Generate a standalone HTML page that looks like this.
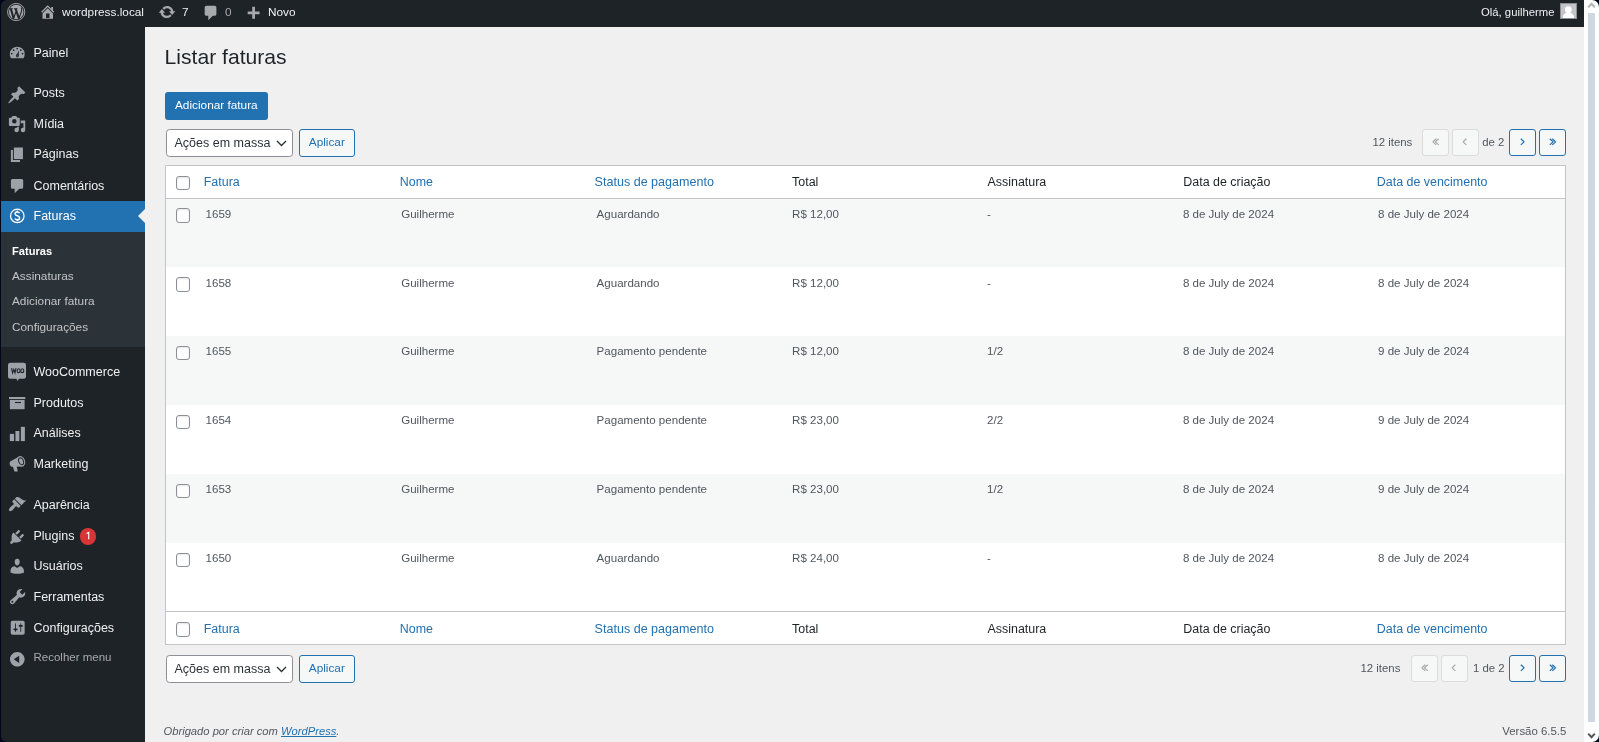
<!DOCTYPE html>
<html><head><meta charset="utf-8"><title>Listar faturas</title>
<style>
html,body{margin:0;padding:0;width:1599px;height:742px;overflow:hidden;background:#02061a;font-family:"Liberation Sans", sans-serif;}
.t{position:absolute;white-space:nowrap;line-height:20px;}
.ic{position:absolute;}
.box{position:absolute;box-sizing:border-box;}
.wrap{position:absolute;left:0;top:0;width:1599px;height:742px;will-change:transform;background:#f0f0f1;clip-path:inset(0 0 0 1px round 6px 7px 7px 6px);}
</style></head><body><div class="wrap">
<div class="box" style="left:0;top:0;width:1584px;height:27px;background:#1d2327"></div>
<svg class="ic" style="left:0;top:0;width:30px;height:26px" viewBox="0 0 30 26">
<circle cx="16.2" cy="12" r="8.6" fill="none" stroke="#a7aaad" stroke-width="0.95"/>
<circle cx="16.2" cy="12" r="7.25" fill="#a7aaad"/>
<g stroke="#1d2327" fill="none" stroke-linecap="butt">
<path d="M10.9 8.9L13.6 18.6" stroke-width="2"/>
<path d="M13.5 18.6L16 11.6" stroke-width="1.15"/>
<path d="M15.6 8.9L19 18.6" stroke-width="2"/>
<path d="M18.9 18.6L21.5 11.4Q22.3 9.3 21.3 7.6" stroke-width="1.15"/>
<path d="M9.3 8.8H12.8M14 8.8H17.4" stroke-width="1.05"/>
</g></svg>
<svg class="ic" style="left:38.85px;top:2.9px;width:17.5px;height:17.5px;color:#a7aaad" viewBox="0 0 20 20" fill="currentColor"><path d="M16 8.5l1.53 1.53-1.06 1.06L10 4.62l-6.47 6.47-1.06-1.06L10 2.5l4 4v-2h2v4zm-6-2.46l6 5.99V18H4v-5.97zM12 17v-5H8v5h4z"/></svg>
<div class="t" style="left:62px;top:1.91px;font-size:11.8px;color:#f0f0f1;">wordpress.local</div>
<svg class="ic" style="left:158.2px;top:2.9px;width:18px;height:18px;color:#a7aaad" viewBox="0 0 20 20" fill="currentColor"><path d="M10.2 3.28c3.53 0 6.43 2.61 6.92 6h2.08l-3.5 4-3.5-4h2.32c-.45-1.97-2.21-3.45-4.32-3.45-1.45 0-2.73.71-3.54 1.78L4.95 5.66a6.965 6.965 0 0 1 5.25-2.38zm-.4 13.44c-3.52 0-6.43-2.61-6.92-6H.8l3.5-4c1.17 1.33 2.33 2.67 3.5 4H5.48c.45 1.97 2.21 3.45 4.32 3.45 1.45 0 2.73-.71 3.54-1.78l1.71 1.95a6.95 6.95 0 0 1-5.25 2.38z"/></svg>
<div class="t" style="left:182px;top:1.91px;font-size:11.8px;color:#f0f0f1;">7</div>
<svg class="ic" style="left:201.5px;top:4.3px;width:18px;height:18px;color:#a7aaad" viewBox="0 0 20 20" fill="currentColor"><path d="M5 2h9c1.1 0 2 .9 2 2v7c0 1.1-.9 2-2 2h-2l-5 5v-5H5c-1.1 0-2-.9-2-2V4c0-1.1.9-2 2-2z"/></svg>
<div class="t" style="left:225px;top:1.91px;font-size:11.8px;color:#a7aaad;">0</div>
<svg class="ic" style="left:244.4px;top:5.2px;width:18.3px;height:18.3px;color:#a7aaad" viewBox="0 0 20 20" fill="currentColor"><path d="M17 7v3h-5v5H9v-5H4V7h5V2h3v5h5z"/></svg>
<div class="t" style="left:268px;top:1.91px;font-size:11.8px;color:#f0f0f1;">Novo</div>
<div class="t" style="left:1481px;top:2.08px;font-size:11.3px;color:#f0f0f1;">Olá, guilherme</div>
<div class="box" style="left:1560px;top:3px;width:17px;height:16px;background:#c3c4c7;border:1px solid #8c8f94;overflow:hidden"><svg style="position:absolute;left:0;top:0" width="15" height="14" viewBox="0 0 15 14"><circle cx="7.3" cy="5.6" r="3.4" fill="#fff"/><path d="M1.7 14c0-3.4 2.4-5.4 5.6-5.4s5.8 2 5.8 5.4z" fill="#fff"/></svg></div>
<div class="box" style="left:0;top:26px;width:145px;height:716px;background:#1d2327"></div>
<div class="box" style="left:0;top:201px;width:145px;height:31px;background:#2271b1"></div>
<div class="box" style="left:0;top:232px;width:145px;height:115px;background:#2c3338"></div>
<svg class="ic" style="left:138px;top:209px;width:7px;height:14px" viewBox="0 0 7 14"><path d="M7 0L0 7l7 7z" fill="#f0f0f1"/></svg>
<div class="t" style="left:33.5px;top:42.67px;font-size:12.5px;color:#f0f0f1;">Painel</div>
<svg class="ic" style="left:7.17px;top:84.62px;width:19.75px;height:19.75px;color:#9ca2a7" viewBox="0 0 20 20" fill="currentColor"><path d="M10.44 3.02l1.82-1.82 6.36 6.35-1.83 1.82c-1.05-.68-2.48-.57-3.41.36l-.75.75c-.92.93-1.04 2.35-.35 3.41l-1.83 1.82-2.41-2.41-2.8 2.79c-.42.42-3.38 2.71-3.8 2.29s1.86-3.39 2.28-3.81l2.79-2.79L4.1 9.36l1.83-1.82c1.05.69 2.48.57 3.4-.36l.75-.75c.93-.92 1.05-2.35.36-3.41z"/></svg>
<div class="t" style="left:33.5px;top:82.67px;font-size:12.5px;color:#f0f0f1;">Posts</div>
<svg class="ic" style="left:7.97px;top:115.02px;width:18.17px;height:18.17px;color:#9ca2a7" viewBox="0 0 20 20" fill="currentColor"><path d="M13 11V4c0-.55-.45-1-1-1h-1.67L9 1H5L3.67 3H2c-.55 0-1 .45-1 1v7c0 .55.45 1 1 1h10c.55 0 1-.45 1-1zM7 4.5a2.5 2.5 0 1 1 0 5 2.5 2.5 0 0 1 0-5zM14 6h5v10.5a2.5 2.5 0 1 1-2.5-2.5c.17 0 .34.02.5.05V9h-3V6zm-4 8.05V13h2v3.5a2.5 2.5 0 1 1-2.5-2.5c.17 0 .34.02.5.05z"/></svg>
<div class="t" style="left:33.5px;top:113.67px;font-size:12.5px;color:#f0f0f1;">Mídia</div>
<div class="t" style="left:33.5px;top:144.17px;font-size:12.5px;color:#f0f0f1;">Páginas</div>
<div class="t" style="left:33.5px;top:176.17px;font-size:12.5px;color:#f0f0f1;">Comentários</div>
<div class="t" style="left:33.5px;top:205.67px;font-size:12.5px;color:#fff;">Faturas</div>
<div class="t" style="left:33.5px;top:362.17px;font-size:12.5px;color:#f0f0f1;">WooCommerce</div>
<div class="t" style="left:33.5px;top:392.67px;font-size:12.5px;color:#f0f0f1;">Produtos</div>
<div class="t" style="left:33.5px;top:423.17px;font-size:12.5px;color:#f0f0f1;">Análises</div>
<div class="t" style="left:33.5px;top:453.67px;font-size:12.5px;color:#f0f0f1;">Marketing</div>
<svg class="ic" style="left:8.1px;top:495.3px;width:18.49px;height:18.49px;color:#9ca2a7" viewBox="0 0 20 20" fill="currentColor"><path d="M14.48 11.06L7.41 3.99l1.5-1.5c.5-.56 2.3-.47 3.51.32 1.21.8 1.43 1.28 2.91 2.1 1.18.64 2.45 1.26 4.45.85zm-.71.71L6.7 4.7 4.93 6.47c-.39.39-.39 1.02 0 1.41l1.06 1.06c.39.39.39 1.03 0 1.42-.6.6-1.43 1.11-2.21 1.69-.35.26-.7.53-1.01.84C1.43 14.23.4 16.08 1.4 17.07c.99 1 2.84-.03 4.18-1.36.31-.31.58-.66.85-1.02.57-.78 1.08-1.61 1.69-2.21a.996.996 0 0 1 1.41 0l1.06 1.06c.39.39 1.02.39 1.41 0z"/></svg>
<div class="t" style="left:33.5px;top:494.67px;font-size:12.5px;color:#f0f0f1;">Aparência</div>
<svg class="ic" style="left:8.0px;top:527.7px;width:18.0px;height:18.0px;color:#9ca2a7" viewBox="0 0 20 20" fill="currentColor"><path d="M13.11 4.36L9.87 7.6 8 5.73l3.24-3.24c.35-.34 1.05-.2 1.56.32.52.51.66 1.21.31 1.55zm-8 1.77l.91-1.12 9.01 9.01-1.19.84c-.71.71-2.63 1.16-3.82 1.16H6.14L4.9 17.26c-.59.59-1.54.59-2.12 0a1.49 1.49 0 0 1 0-2.12l1.24-1.24v-3.88c0-1.13.4-3.19 1.09-3.89zm7.26 3.97l3.24-3.24c.34-.35 1.04-.21 1.55.31.52.51.66 1.21.31 1.55l-3.24 3.25z"/></svg>
<div class="t" style="left:33.5px;top:525.67px;font-size:12.5px;color:#f0f0f1;">Plugins</div>
<svg class="ic" style="left:8.02px;top:556.66px;width:18.45px;height:18.45px;color:#9ca2a7" viewBox="0 0 20 20" fill="currentColor"><path d="M10 9.25c-2.27 0-2.73-3.44-2.73-3.44C7 4.02 7.82 2 9.97 2c2.16 0 2.98 2.02 2.71 3.81 0 0-.41 3.44-2.68 3.44zm0 2.57L12.72 10c2.39 0 4.52 2.33 4.52 4.53v2.49s-3.65 1.13-7.24 1.13c-3.65 0-7.24-1.13-7.24-1.13v-2.49c0-2.25 1.94-4.48 4.47-4.48z"/></svg>
<div class="t" style="left:33.5px;top:556.17px;font-size:12.5px;color:#f0f0f1;">Usuários</div>
<svg class="ic" style="left:7.77px;top:587.17px;width:19.16px;height:19.16px;color:#9ca2a7" viewBox="0 0 20 20" fill="currentColor"><path d="M16.68 9.77c-1.34 1.34-3.3 1.67-4.95.99l-5.41 6.52c-.99.99-2.59.99-3.58 0s-.99-2.59 0-3.57l6.52-5.42c-.68-1.65-.35-3.61.99-4.95 1.28-1.28 3.12-1.62 4.72-1.06l-2.89 2.89 2.82 2.82 2.86-2.87c.53 1.58.18 3.39-1.08 4.65zM3.81 16.21c.4.39 1.04.39 1.43 0 .4-.4.4-1.04 0-1.43-.39-.4-1.03-.4-1.43 0a1.01 1.01 0 0 0 0 1.43z"/></svg>
<div class="t" style="left:33.5px;top:586.67px;font-size:12.5px;color:#f0f0f1;">Ferramentas</div>
<svg class="ic" style="left:9.09px;top:618.94px;width:17.42px;height:17.42px;color:#9ca2a7" viewBox="0 0 20 20" fill="currentColor"><path d="M18 16V4c0-1.1-.9-2-2-2H4c-1.1 0-2 .9-2 2v12c0 1.1.9 2 2 2h12c1.1 0 2-.9 2-2zM8 11h1c.55 0 1 .45 1 1s-.45 1-1 1H8v1.5c0 .28-.22.5-.5.5s-.5-.22-.5-.5V13H6c-.55 0-1-.45-1-1s.45-1 1-1h1V5.5c0-.28.22-.5.5-.5s.5.22.5.5V11zm5-2h-1c-.55 0-1-.45-1-1s.45-1 1-1h1V5.5c0-.28.22-.5.5-.5s.5.22.5.5V7h1c.55 0 1 .45 1 1s-.45 1-1 1h-1v5.5c0 .28-.22.5-.5.5s-.5-.22-.5-.5V9z"/></svg>
<div class="t" style="left:33.5px;top:617.67px;font-size:12.5px;color:#f0f0f1;">Configurações</div>
<svg class="ic" style="left:0;top:0;width:40px;height:742px" viewBox="0 0 40 742">
<g fill="#9ca2a7">
<path d="M10.2 362.7h13.6q2.2 0 2.2 2.2v11.6q0 2.2-2.2 2.2h-5l-1 2.3-1.6-2.3h-6q-2.2 0-2.2-2.2v-11.6q0-2.2 2.2-2.2z"/>
<path d="M11 58.2A7.45 7.45 0 1 1 23.5 58.2Z"/>
<rect x="13.85" y="147.5" width="9.1" height="11.6"/><path d="M10.9 150h2v10.1h7.1v2h-9.1z"/>
<path d="M12.4 179h9.3q1.5 0 1.5 1.5v6.85q0 1.5-1.5 1.5h-2.4l-4.6 4.4v-4.4h-2.3q-1.5 0-1.5-1.5v-6.85q0-1.5 1.5-1.5z"/>
<rect x="9" y="397" width="16.3" height="2.1"/><rect x="9.9" y="400" width="14.7" height="9.2"/>
<rect x="9.85" y="433.9" width="4.2" height="7.2"/>
<rect x="15.45" y="431" width="3.9" height="10.1"/>
<rect x="20.85" y="426.85" width="4.05" height="14.25"/>
<path d="M9.6 463.2q0-1.6 1.4-2.2l8.2-4.6 3.6 10.2-9.5.2q-3.7.2-3.7-3.6z"/>
<ellipse cx="21.1" cy="461.3" rx="3.9" ry="5.5" transform="rotate(-22 21.1 461.3)"/>
<path d="M12.6 465.8l3.9-.2 1.3 6h-3.4z"/>
</g>
<g fill="none" stroke="#1d2327">
<path d="M11.6 368.2l1 4.8 1.2-3.6 1.2 3.6 1-4.8" stroke-width="1.1"/>
<path d="M15 402.5h6" stroke-width="1.1"/>
</g>
<g fill="#1d2327"><circle cx="17.2" cy="48.6" r="0.85"/><circle cx="13.65" cy="50.2" r="0.85"/><circle cx="20.8" cy="50.2" r="0.85"/><circle cx="11.8" cy="53.6" r="0.85"/><circle cx="22.6" cy="53.6" r="0.85"/><path d="M19 50.6L18.6 56.2 16.1 55.6z"/><circle cx="17.3" cy="56" r="1.45"/></g>
<g fill="#9ca2a7"><circle cx="17.3" cy="56" r="0.55"/></g>
<g fill="none" stroke="#1d2327">
<ellipse cx="18.6" cy="370.7" rx="1.5" ry="2" stroke-width="1.1"/>
<ellipse cx="22.3" cy="370.7" rx="1.5" ry="2" stroke-width="1.1"/>
<ellipse cx="21.1" cy="461.3" rx="2.3" ry="3.6" transform="rotate(-22 21.1 461.3)" stroke-width="1"/>
</g>
<g fill="none" stroke="#fff"><circle cx="17.3" cy="215.95" r="6.75" stroke-width="1.25"/><path d="M19.5 213.1Q19 212 17.3 212Q15.1 212 15.1 213.7Q15.1 215.1 17.3 215.7Q19.6 216.3 19.6 218Q19.6 219.8 17.3 219.8Q15.4 219.8 14.9 218.5M17.3 210.6v1.6M17.3 219.6v1.7" stroke-width="1.5"/></g>
</svg>
<div class="box" style="left:80px;top:528px;width:16.2px;height:17px;border-radius:8.5px;background:#d63638;color:#fff;font-size:10.2px;line-height:17px;text-align:center"><svg style="position:absolute;left:0;top:0" width="17" height="17" viewBox="0 0 17 17"><path d="M6.6 5.6l2.1-1.2v6.8" fill="none" stroke="#fff" stroke-width="1.15"/></svg></div>
<div class="t" style="left:12px;top:241.15px;font-size:11.1px;color:#fff;font-weight:bold;">Faturas</div>
<div class="t" style="left:12px;top:266.41px;font-size:11.8px;color:#c3c4c7;">Assinaturas</div>
<div class="t" style="left:12px;top:291.41px;font-size:11.8px;color:#c3c4c7;">Adicionar fatura</div>
<div class="t" style="left:12px;top:316.91px;font-size:11.8px;color:#c3c4c7;">Configurações</div>
<svg class="ic" style="left:7.82px;top:649.59px;width:18.61px;height:18.61px;color:#9ca2a7" viewBox="0 0 20 20" fill="currentColor"><path d="M10 2.16c4.33 0 7.84 3.51 7.84 7.84s-3.51 7.84-7.84 7.84S2.16 14.33 2.16 10 5.71 2.16 10 2.16zm2 11.72V6.12L6.18 9.97z"/></svg>
<div class="t" style="left:33.5px;top:646.62px;font-size:11.5px;color:#a7aaad;">Recolher menu</div>
<div class="t" style="left:164.6px;top:46.59px;font-size:21.1px;color:#1d2327;">Listar faturas</div>
<div class="box" style="left:165px;top:92px;width:103px;height:28px;background:#2271b1;border-radius:3px"></div>
<div class="t" style="left:175px;top:95.21px;font-size:11.8px;color:#fff;">Adicionar fatura</div>
<div class="box" style="left:166px;top:129px;width:127px;height:28px;background:#fff;border:1px solid #8c8f94;border-radius:3.5px"></div>
<div class="t" style="left:174.5px;top:133.17px;font-size:12.5px;color:#2c3338;">Ações em massa</div>
<svg class="ic" style="left:275.6px;top:140.4px;width:11px;height:7px" viewBox="0 0 11 7"><path d="M1 1l4.5 4.5L10 1" fill="none" stroke="#2c3338" stroke-width="1.35"/></svg>
<div class="box" style="left:299px;top:129px;width:56px;height:28px;background:#f6f7f7;border:1px solid #2271b1;border-radius:3px"></div>
<div class="t" style="left:308.8px;top:132.41px;font-size:11.8px;color:#2271b1;">Aplicar</div>
<div class="box" style="left:166px;top:655px;width:127px;height:28px;background:#fff;border:1px solid #8c8f94;border-radius:3.5px"></div>
<div class="t" style="left:174.5px;top:659.17px;font-size:12.5px;color:#2c3338;">Ações em massa</div>
<svg class="ic" style="left:275.6px;top:666.4px;width:11px;height:7px" viewBox="0 0 11 7"><path d="M1 1l4.5 4.5L10 1" fill="none" stroke="#2c3338" stroke-width="1.35"/></svg>
<div class="box" style="left:299px;top:655px;width:56px;height:28px;background:#f6f7f7;border:1px solid #2271b1;border-radius:3px"></div>
<div class="t" style="left:308.8px;top:658.41px;font-size:11.8px;color:#2271b1;">Aplicar</div>
<div class="t" style="left:1372.4px;top:132.05px;font-size:11.4px;color:#50575e;">12 itens</div>
<div class="box" style="left:1422px;top:129px;width:27px;height:27px;background:#f6f7f7;border:1px solid #dcdcde;border-radius:3px"><svg style="position:absolute;left:-1px;top:-1px" width="27" height="27" viewBox="0 0 27 27"><path d="M14.20 9.7Q11.90 11.8 11.00 12.8Q11.90 13.8 14.20 15.9M16.70 9.7Q14.40 11.8 13.50 12.8Q14.40 13.8 16.70 15.9" fill="none" stroke="#a7aaad" stroke-width="1.2"/></svg></div>
<div class="box" style="left:1452px;top:129px;width:27px;height:27px;background:#f6f7f7;border:1px solid #dcdcde;border-radius:3px"><svg style="position:absolute;left:-1px;top:-1px" width="27" height="27" viewBox="0 0 27 27"><path d="M14.40 9.7Q12.10 11.8 11.20 12.8Q12.10 13.8 14.40 15.9" fill="none" stroke="#a7aaad" stroke-width="1.2"/></svg></div>
<div class="t" style="left:1482.2px;top:132.05px;font-size:11.4px;color:#50575e;">de 2</div>
<div class="box" style="left:1509px;top:129px;width:27px;height:27px;background:#f6f7f7;border:1px solid #2271b1;border-radius:3px"><svg style="position:absolute;left:-1px;top:-1px" width="27" height="27" viewBox="0 0 27 27"><path d="M11.80 9.7Q14.10 11.8 15.00 12.8Q14.10 13.8 11.80 15.9" fill="none" stroke="#2271b1" stroke-width="1.2"/></svg></div>
<div class="box" style="left:1539px;top:129px;width:27px;height:27px;background:#f6f7f7;border:1px solid #2271b1;border-radius:3px"><svg style="position:absolute;left:-1px;top:-1px" width="27" height="27" viewBox="0 0 27 27"><path d="M10.80 9.7Q13.10 11.8 14.00 12.8Q13.10 13.8 10.80 15.9M13.30 9.7Q15.60 11.8 16.50 12.8Q15.60 13.8 13.30 15.9" fill="none" stroke="#2271b1" stroke-width="1.2"/></svg></div>
<div class="t" style="left:1360.5px;top:658.05px;font-size:11.4px;color:#50575e;">12 itens</div>
<div class="box" style="left:1411px;top:655px;width:27px;height:27px;background:#f6f7f7;border:1px solid #dcdcde;border-radius:3px"><svg style="position:absolute;left:-1px;top:-1px" width="27" height="27" viewBox="0 0 27 27"><path d="M14.20 9.7Q11.90 11.8 11.00 12.8Q11.90 13.8 14.20 15.9M16.70 9.7Q14.40 11.8 13.50 12.8Q14.40 13.8 16.70 15.9" fill="none" stroke="#a7aaad" stroke-width="1.2"/></svg></div>
<div class="box" style="left:1441px;top:655px;width:27px;height:27px;background:#f6f7f7;border:1px solid #dcdcde;border-radius:3px"><svg style="position:absolute;left:-1px;top:-1px" width="27" height="27" viewBox="0 0 27 27"><path d="M14.40 9.7Q12.10 11.8 11.20 12.8Q12.10 13.8 14.40 15.9" fill="none" stroke="#a7aaad" stroke-width="1.2"/></svg></div>
<div class="t" style="left:1473px;top:658.05px;font-size:11.4px;color:#50575e;">1 de 2</div>
<div class="box" style="left:1509px;top:655px;width:27px;height:27px;background:#f6f7f7;border:1px solid #2271b1;border-radius:3px"><svg style="position:absolute;left:-1px;top:-1px" width="27" height="27" viewBox="0 0 27 27"><path d="M11.80 9.7Q14.10 11.8 15.00 12.8Q14.10 13.8 11.80 15.9" fill="none" stroke="#2271b1" stroke-width="1.2"/></svg></div>
<div class="box" style="left:1539px;top:655px;width:27px;height:27px;background:#f6f7f7;border:1px solid #2271b1;border-radius:3px"><svg style="position:absolute;left:-1px;top:-1px" width="27" height="27" viewBox="0 0 27 27"><path d="M10.80 9.7Q13.10 11.8 14.00 12.8Q13.10 13.8 10.80 15.9M13.30 9.7Q15.60 11.8 16.50 12.8Q15.60 13.8 13.30 15.9" fill="none" stroke="#2271b1" stroke-width="1.2"/></svg></div>
<div class="box" style="left:165px;top:165px;width:1401px;height:480px;background:#fff;border:1px solid #c3c4c7"></div>
<div class="box" style="left:166px;top:198px;width:1399px;height:1px;background:#c3c4c7"></div>
<div class="box" style="left:166px;top:611px;width:1399px;height:1px;background:#c3c4c7"></div>
<div class="box" style="left:176px;top:176px;width:14px;height:14px;background:#fff;border:1px solid #8c8f94;border-radius:3px;box-shadow:inset 0 1px 2px rgba(0,0,0,.1)"></div>
<div class="t" style="left:203.75px;top:171.69px;font-size:12.45px;color:#2271b1;">Fatura</div>
<div class="t" style="left:399.8px;top:171.69px;font-size:12.45px;color:#2271b1;">Nome</div>
<div class="t" style="left:594.6px;top:171.65px;font-size:12.55px;color:#2271b1;">Status de pagamento</div>
<div class="t" style="left:792.1px;top:171.69px;font-size:12.45px;color:#1d2327;">Total</div>
<div class="t" style="left:987.5px;top:171.69px;font-size:12.45px;color:#1d2327;">Assinatura</div>
<div class="t" style="left:1183.3px;top:171.69px;font-size:12.45px;color:#1d2327;">Data de criação</div>
<div class="t" style="left:1376.8px;top:171.69px;font-size:12.45px;color:#2271b1;">Data de vencimento</div>
<div class="box" style="left:176px;top:622px;width:14px;height:15px;background:#fff;border:1px solid #8c8f94;border-radius:3px;box-shadow:inset 0 1px 2px rgba(0,0,0,.1)"></div>
<div class="t" style="left:203.75px;top:618.69px;font-size:12.45px;color:#2271b1;">Fatura</div>
<div class="t" style="left:399.8px;top:618.69px;font-size:12.45px;color:#2271b1;">Nome</div>
<div class="t" style="left:594.6px;top:618.65px;font-size:12.55px;color:#2271b1;">Status de pagamento</div>
<div class="t" style="left:792.1px;top:618.69px;font-size:12.45px;color:#1d2327;">Total</div>
<div class="t" style="left:987.5px;top:618.69px;font-size:12.45px;color:#1d2327;">Assinatura</div>
<div class="t" style="left:1183.3px;top:618.69px;font-size:12.45px;color:#1d2327;">Data de criação</div>
<div class="t" style="left:1376.8px;top:618.69px;font-size:12.45px;color:#2271b1;">Data de vencimento</div>
<div class="box" style="left:166px;top:199px;width:1399px;height:68px;background:#f6f7f7"></div>
<div class="box" style="left:176px;top:208px;width:14px;height:15px;background:#fff;border:1px solid #8c8f94;border-radius:3px;box-shadow:inset 0 1px 2px rgba(0,0,0,.1)"></div>
<div class="t" style="left:205.6px;top:204.00px;font-size:11.55px;color:#50575e;">1659</div>
<div class="t" style="left:401.2px;top:204.00px;font-size:11.55px;color:#50575e;">Guilherme</div>
<div class="t" style="left:596.6px;top:204.00px;font-size:11.55px;color:#50575e;">Aguardando</div>
<div class="t" style="left:792.1px;top:204.00px;font-size:11.55px;color:#50575e;">R$ 12,00</div>
<div class="t" style="left:987.1px;top:204.00px;font-size:11.55px;color:#50575e;">-</div>
<div class="t" style="left:1182.9px;top:204.00px;font-size:11.55px;color:#50575e;">8 de July de 2024</div>
<div class="t" style="left:1378px;top:204.00px;font-size:11.55px;color:#50575e;">8 de July de 2024</div>
<div class="box" style="left:176px;top:277px;width:14px;height:15px;background:#fff;border:1px solid #8c8f94;border-radius:3px;box-shadow:inset 0 1px 2px rgba(0,0,0,.1)"></div>
<div class="t" style="left:205.6px;top:273.00px;font-size:11.55px;color:#50575e;">1658</div>
<div class="t" style="left:401.2px;top:273.00px;font-size:11.55px;color:#50575e;">Guilherme</div>
<div class="t" style="left:596.6px;top:273.00px;font-size:11.55px;color:#50575e;">Aguardando</div>
<div class="t" style="left:792.1px;top:273.00px;font-size:11.55px;color:#50575e;">R$ 12,00</div>
<div class="t" style="left:987.1px;top:273.00px;font-size:11.55px;color:#50575e;">-</div>
<div class="t" style="left:1182.9px;top:273.00px;font-size:11.55px;color:#50575e;">8 de July de 2024</div>
<div class="t" style="left:1378px;top:273.00px;font-size:11.55px;color:#50575e;">8 de July de 2024</div>
<div class="box" style="left:166px;top:336px;width:1399px;height:69px;background:#f6f7f7"></div>
<div class="box" style="left:176px;top:346px;width:14px;height:14px;background:#fff;border:1px solid #8c8f94;border-radius:3px;box-shadow:inset 0 1px 2px rgba(0,0,0,.1)"></div>
<div class="t" style="left:205.6px;top:341.00px;font-size:11.55px;color:#50575e;">1655</div>
<div class="t" style="left:401.2px;top:341.00px;font-size:11.55px;color:#50575e;">Guilherme</div>
<div class="t" style="left:596.6px;top:341.00px;font-size:11.55px;color:#50575e;">Pagamento pendente</div>
<div class="t" style="left:792.1px;top:341.00px;font-size:11.55px;color:#50575e;">R$ 12,00</div>
<div class="t" style="left:987.1px;top:341.00px;font-size:11.55px;color:#50575e;">1/2</div>
<div class="t" style="left:1182.9px;top:341.00px;font-size:11.55px;color:#50575e;">8 de July de 2024</div>
<div class="t" style="left:1378px;top:341.00px;font-size:11.55px;color:#50575e;">9 de July de 2024</div>
<div class="box" style="left:176px;top:415px;width:14px;height:14px;background:#fff;border:1px solid #8c8f94;border-radius:3px;box-shadow:inset 0 1px 2px rgba(0,0,0,.1)"></div>
<div class="t" style="left:205.6px;top:410.00px;font-size:11.55px;color:#50575e;">1654</div>
<div class="t" style="left:401.2px;top:410.00px;font-size:11.55px;color:#50575e;">Guilherme</div>
<div class="t" style="left:596.6px;top:410.00px;font-size:11.55px;color:#50575e;">Pagamento pendente</div>
<div class="t" style="left:792.1px;top:410.00px;font-size:11.55px;color:#50575e;">R$ 23,00</div>
<div class="t" style="left:987.1px;top:410.00px;font-size:11.55px;color:#50575e;">2/2</div>
<div class="t" style="left:1182.9px;top:410.00px;font-size:11.55px;color:#50575e;">8 de July de 2024</div>
<div class="t" style="left:1378px;top:410.00px;font-size:11.55px;color:#50575e;">9 de July de 2024</div>
<div class="box" style="left:166px;top:474px;width:1399px;height:69px;background:#f6f7f7"></div>
<div class="box" style="left:176px;top:484px;width:14px;height:14px;background:#fff;border:1px solid #8c8f94;border-radius:3px;box-shadow:inset 0 1px 2px rgba(0,0,0,.1)"></div>
<div class="t" style="left:205.6px;top:479.00px;font-size:11.55px;color:#50575e;">1653</div>
<div class="t" style="left:401.2px;top:479.00px;font-size:11.55px;color:#50575e;">Guilherme</div>
<div class="t" style="left:596.6px;top:479.00px;font-size:11.55px;color:#50575e;">Pagamento pendente</div>
<div class="t" style="left:792.1px;top:479.00px;font-size:11.55px;color:#50575e;">R$ 23,00</div>
<div class="t" style="left:987.1px;top:479.00px;font-size:11.55px;color:#50575e;">1/2</div>
<div class="t" style="left:1182.9px;top:479.00px;font-size:11.55px;color:#50575e;">8 de July de 2024</div>
<div class="t" style="left:1378px;top:479.00px;font-size:11.55px;color:#50575e;">9 de July de 2024</div>
<div class="box" style="left:176px;top:553px;width:14px;height:14px;background:#fff;border:1px solid #8c8f94;border-radius:3px;box-shadow:inset 0 1px 2px rgba(0,0,0,.1)"></div>
<div class="t" style="left:205.6px;top:548.00px;font-size:11.55px;color:#50575e;">1650</div>
<div class="t" style="left:401.2px;top:548.00px;font-size:11.55px;color:#50575e;">Guilherme</div>
<div class="t" style="left:596.6px;top:548.00px;font-size:11.55px;color:#50575e;">Aguardando</div>
<div class="t" style="left:792.1px;top:548.00px;font-size:11.55px;color:#50575e;">R$ 24,00</div>
<div class="t" style="left:987.1px;top:548.00px;font-size:11.55px;color:#50575e;">-</div>
<div class="t" style="left:1182.9px;top:548.00px;font-size:11.55px;color:#50575e;">8 de July de 2024</div>
<div class="t" style="left:1378px;top:548.00px;font-size:11.55px;color:#50575e;">8 de July de 2024</div>
<div class="t" style="left:163.5px;top:721.12px;font-size:11.2px;color:#50575e;font-style:italic;">Obrigado por criar com <span style="color:#2271b1;text-decoration:underline">WordPress</span>.</div>
<div class="t" style="left:1502.3px;top:721.05px;font-size:11.4px;color:#50575e;">Versão 6.5.5</div>
<div class="box" style="left:1584px;top:0;width:15px;height:742px;background:#fff"></div>
<div class="box" style="left:1588px;top:13px;width:7px;height:709px;background:#cfd8e0;border-radius:1px"></div>
<svg class="ic" style="left:1587px;top:1px;width:9px;height:8px" viewBox="0 0 9 8"><path d="M1.2 6.4L4.5 2.8 7.8 6.4" fill="none" stroke="#b4b4b4" stroke-width="2"/></svg>
<svg class="ic" style="left:1587px;top:732px;width:9px;height:8px" viewBox="0 0 9 8"><path d="M1.2 1.6L4.5 5.2 7.8 1.6" fill="none" stroke="#555" stroke-width="2"/></svg>
</div></body></html>
